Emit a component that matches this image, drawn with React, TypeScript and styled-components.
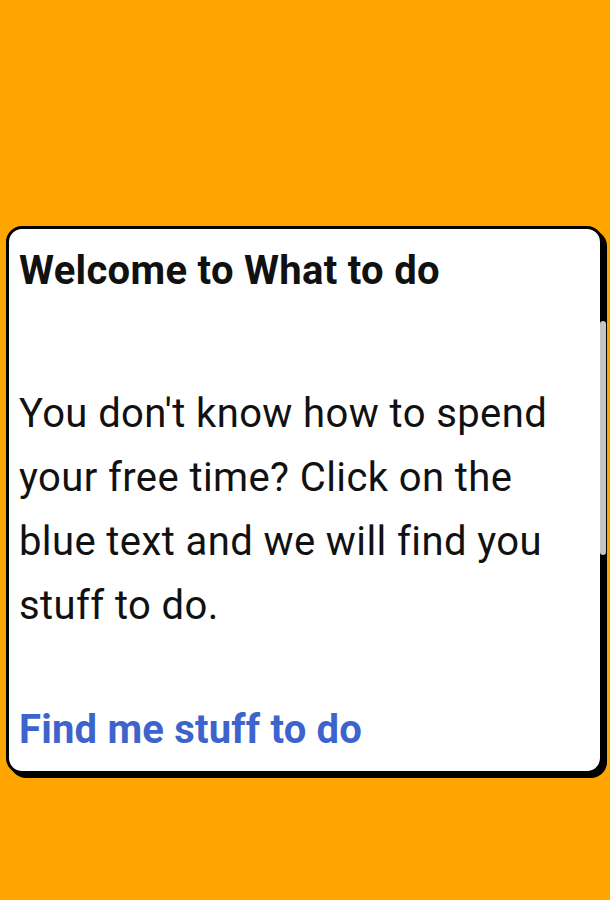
import styled, { createGlobalStyle } from "styled-components";

const GlobalStyle = createGlobalStyle`
  html, body {
    margin: 0;
    padding: 0;
    background: #ffa500;
  }
  body {
    font-family: Roboto, "Liberation Sans", sans-serif;
  }
`;

export default function App() {
  return (
    <>
      <GlobalStyle />
      <Page>
        <Card>
          <Title>Welcome to What to do</Title>
          <Body>
            You don't know how to spend your free time? Click on the blue text and we will find you
            stuff to do.
          </Body>
          <Link href="#">Find me stuff to do</Link>
          <ScrollThumb />
        </Card>
      </Page>
    </>
  );
}

const Page = styled.div`
  width: 610px;
  height: 900px;
  box-sizing: border-box;
  padding: 226px 7px 0 6px;
`;

const Card = styled.div`
  position: relative;
  box-sizing: border-box;
  width: 597px;
  height: 548px;
  padding: 17px 30px 0 10px;
  background: #fff;
  border: 3px solid #000;
  border-radius: 16px;
  box-shadow: 4px 4px 0 #000;
`;

const Title = styled.h1`
  margin: 0;
  font-size: 40px;
  font-weight: 700;
  letter-spacing: 0.3px;
  line-height: 50px;
  color: #111;
`;

const Body = styled.p`
  margin: 86px 0 0 0;
  font-size: 40px;
  font-weight: 400;
  letter-spacing: 0.4px;
  line-height: 64px;
  color: #111;
`;

const Link = styled.a`
  display: block;
  margin-top: 68px;
  font-size: 40px;
  font-weight: 700;
  letter-spacing: 0.2px;
  color: #3d64cc;
  text-decoration: none;
`;

const ScrollThumb = styled.div`
  position: absolute;
  right: -6px;
  top: 92px;
  width: 6px;
  height: 234px;
  border-radius: 3px;
  background: #c4c4c4;
`;
